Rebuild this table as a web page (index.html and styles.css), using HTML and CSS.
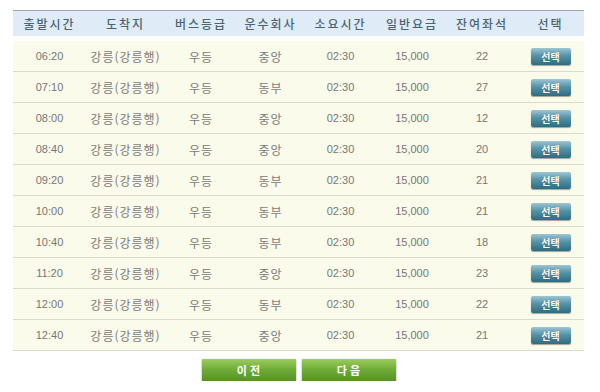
FILE: index.html
```html
<!DOCTYPE html>
<html lang="ko">
<head>
<meta charset="utf-8">
<link rel="stylesheet" href="styles.css">
</head>
<body>
<div class="wrap">
  <table class="bus">
    <colgroup>
      <col class="c1"><col class="c2"><col class="c3"><col class="c4"><col class="c5"><col class="c6"><col class="c7"><col class="c8">
    </colgroup>
    <thead>
      <tr class="head"><th>출발시간</th><th>도착지</th><th>버스등급</th><th>운수회사</th><th>소요시간</th><th>일반요금</th><th>잔여좌석</th><th>선택</th></tr>
      <tr class="spacer"><td colspan="8"></td></tr>
    </thead>
    <tbody>
      <tr><td>06:20</td><td class="kr">강릉(강릉행)</td><td class="kr">우등</td><td class="kr">중앙</td><td>02:30</td><td>15,000</td><td>22</td><td><span class="sel">선택</span></td></tr>
      <tr><td>07:10</td><td class="kr">강릉(강릉행)</td><td class="kr">우등</td><td class="kr">동부</td><td>02:30</td><td>15,000</td><td>27</td><td><span class="sel">선택</span></td></tr>
      <tr><td>08:00</td><td class="kr">강릉(강릉행)</td><td class="kr">우등</td><td class="kr">중앙</td><td>02:30</td><td>15,000</td><td>12</td><td><span class="sel">선택</span></td></tr>
      <tr><td>08:40</td><td class="kr">강릉(강릉행)</td><td class="kr">우등</td><td class="kr">중앙</td><td>02:30</td><td>15,000</td><td>20</td><td><span class="sel">선택</span></td></tr>
      <tr><td>09:20</td><td class="kr">강릉(강릉행)</td><td class="kr">우등</td><td class="kr">동부</td><td>02:30</td><td>15,000</td><td>21</td><td><span class="sel">선택</span></td></tr>
      <tr><td>10:00</td><td class="kr">강릉(강릉행)</td><td class="kr">우등</td><td class="kr">동부</td><td>02:30</td><td>15,000</td><td>21</td><td><span class="sel">선택</span></td></tr>
      <tr><td>10:40</td><td class="kr">강릉(강릉행)</td><td class="kr">우등</td><td class="kr">동부</td><td>02:30</td><td>15,000</td><td>18</td><td><span class="sel">선택</span></td></tr>
      <tr><td>11:20</td><td class="kr">강릉(강릉행)</td><td class="kr">우등</td><td class="kr">중앙</td><td>02:30</td><td>15,000</td><td>23</td><td><span class="sel">선택</span></td></tr>
      <tr><td>12:00</td><td class="kr">강릉(강릉행)</td><td class="kr">우등</td><td class="kr">동부</td><td>02:30</td><td>15,000</td><td>22</td><td><span class="sel">선택</span></td></tr>
      <tr><td>12:40</td><td class="kr">강릉(강릉행)</td><td class="kr">우등</td><td class="kr">중앙</td><td>02:30</td><td>15,000</td><td>21</td><td><span class="sel">선택</span></td></tr>
    </tbody>
  </table>
  <div class="pager">
    <span class="nav">이 전</span>
    <span class="nav">다 음</span>
  </div>
</div>
</body>
</html>
```
FILE: styles.css
```css
html, body {
  margin: 0;
  padding: 0;
  background: #ffffff;
}
body {
  font-family: "Liberation Sans", "Noto Sans CJK KR", sans-serif;
}
.wrap {
  width: 571px;
  padding: 10px 0 0 13px;
}
.bus {
  width: 571px;
  border-collapse: collapse;
  table-layout: fixed;
}
.c1 { width: 73px; }
.c2 { width: 79px; }
.c3 { width: 72px; }
.c4 { width: 67px; }
.c5 { width: 73px; }
.c6 { width: 70px; }
.c7 { width: 70px; }
.c8 { width: 67px; }
.head th {
  height: 25px;
  padding: 0;
  background: #dfebf6;
  border-top: 1px solid #9ea5ab;
  color: #4a6572;
  font-family: "Noto Sans CJK KR", sans-serif;
  font-size: 12px;
  font-weight: 500;
  letter-spacing: 2px;
  text-align: center;
}
.spacer td {
  height: 5px;
  padding: 0;
}
tbody td {
  height: 30px;
  padding: 0;
  background: #fafbea;
  border-bottom: 1px solid #d9dbcc;
  color: #777777;
  font-size: 11px;
  text-align: center;
}
tbody td.kr {
  font-family: "Noto Sans CJK KR", sans-serif;
  font-size: 12px;
  font-weight: normal;
  letter-spacing: 1px;
  color: #7a7a7a;
}
.sel {
  display: inline-block;
  width: 40px;
  height: 17px;
  line-height: 17px;
  border-radius: 2px;
  background: linear-gradient(#9cc6d3, #5693a8 45%, #2d6c82);
  color: #ffffff;
  font-family: "Noto Sans CJK KR", sans-serif;
  font-size: 10px;
  font-weight: bold;
  text-shadow: 0 0 1px rgba(0,0,0,0.3);
  box-shadow: 0 1px 1px rgba(0,0,0,0.35);
  vertical-align: middle;
}
.pager {
  display: flex;
  justify-content: center;
  gap: 6px;
  margin-top: 8px;
}
.nav {
  display: block;
  width: 94px;
  height: 22px;
  line-height: 22px;
  text-align: center;
  background: linear-gradient(#9ccc5c, #6eaa36 50%, #569227);
  color: #ffffff;
  font-family: "Noto Sans CJK KR", sans-serif;
  font-size: 11px;
  font-weight: bold;
  box-shadow: 0 1px 2px rgba(0,0,0,0.4);
}
```
